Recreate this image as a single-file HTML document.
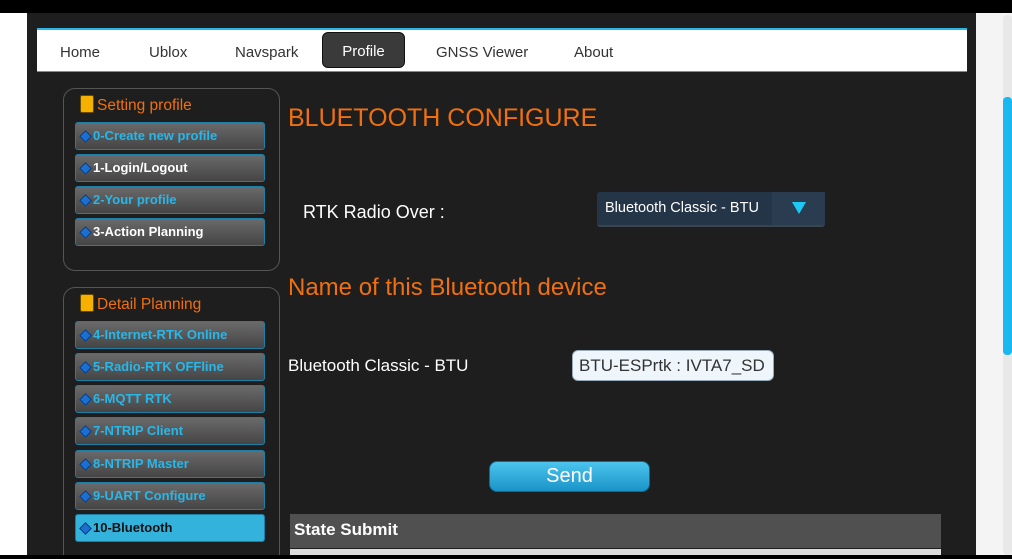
<!DOCTYPE html>
<html style="width:1012px;height:559px;overflow:hidden"><head><style>
*{margin:0;padding:0;box-sizing:border-box}
body{width:1012px;height:559px;overflow:hidden;background:#000;font-family:"Liberation Sans",Arial,sans-serif;position:relative}
.a{position:absolute}
.item{position:absolute;left:75px;width:190px;height:28px;border:1px solid #1c7fa8;border-radius:3px;background:linear-gradient(#6a6a6a,#454545);font-weight:bold;font-size:13px;color:#29b6e8;line-height:26px;padding-left:17px;white-space:nowrap}
.item:before{content:"";position:absolute;left:5px;top:9px;width:7px;height:7px;background:#1a6fd0;border:1px solid #0b3d80;transform:rotate(45deg)}
.box{position:absolute;left:63px;width:217px;border:1px solid #555;border-radius:12px}
.bt{position:absolute;left:16px;top:6px;color:#f07010;font-size:15.5px}
.bt:before{content:"";display:inline-block;width:12px;height:16px;background:#f5b000;border:1px solid #6a4a00;border-radius:2px;margin-right:3px;vertical-align:-3px}
.nav{position:absolute;top:44px;font-size:15px;color:#333}
</style></head><body>
<div class="a" style="left:0;top:13px;width:27px;height:542px;background:#fff"></div>
<div class="a" style="left:27px;top:13px;width:949px;height:542px;background:#1e1e1e"></div>
<div class="a" style="left:976px;top:13px;width:36px;height:542px;background:#f4f4f4"></div>
<div class="a" style="left:1003px;top:15px;width:9px;height:540px;background:#e8e8e8;border-radius:4px"></div>
<div class="a" style="left:1003px;top:97px;width:9px;height:258px;background:#1ab8f0;border-radius:4px"></div>
<div class="a" style="left:37px;top:28px;width:930px;height:44px;background:#fff;border-top:2px solid #29b6e8;border-bottom:1px solid #888"></div>
<div class="nav" style="left:60px">Home</div>
<div class="nav" style="left:149px">Ublox</div>
<div class="nav" style="left:235px">Navspark</div>
<div class="a" style="left:322px;top:32px;width:83px;height:36px;background:#3a3a3a;border:1px solid #111;border-radius:6px;color:#fff;font-size:15px;text-align:center;line-height:38px">Profile</div>
<div class="nav" style="left:436px">GNSS Viewer</div>
<div class="nav" style="left:574px">About</div>

<div class="box" style="top:88px;height:183px"><div class="bt">Setting profile</div></div>
<div class="item" style="top:122px">0-Create new profile</div>
<div class="item" style="top:154px;color:#fff">1-Login/Logout</div>
<div class="item" style="top:186px">2-Your profile</div>
<div class="item" style="top:218px;color:#fff">3-Action Planning</div>

<div class="box" style="top:287px;height:290px"><div class="bt">Detail Planning</div></div>
<div class="item" style="top:321px">4-Internet-RTK Online</div>
<div class="item" style="top:353px">5-Radio-RTK OFFline</div>
<div class="item" style="top:385px">6-MQTT RTK</div>
<div class="item" style="top:417px">7-NTRIP Client</div>
<div class="item" style="top:450px">8-NTRIP Master</div>
<div class="item" style="top:482px">9-UART Configure</div>
<div class="item" style="top:514px;background:#33b3dc;color:#111">10-Bluetooth</div>
<div class="a" style="left:0;top:555px;width:1012px;height:4px;background:#000"></div>

<div class="a" style="left:288px;top:104px;color:#f07010;font-size:25px">BLUETOOTH CONFIGURE</div>
<div class="a" style="left:303px;top:202px;color:#fff;font-size:18px">RTK Radio Over :</div>
<div class="a" style="left:597px;top:192px;width:228px;height:35px;background:#253548;border-radius:3px;border-bottom:2px solid #3a4550"><span class="a" style="left:8px;top:8px;color:#fff;font-size:14.5px">Bluetooth Classic - BTU</span><div class="a" style="left:175px;top:0;width:53px;height:33px;background:#2a3c50"></div><div class="a" style="left:195px;top:10px;width:0;height:0;border-left:7px solid transparent;border-right:7px solid transparent;border-top:12px solid #1ec8f5"></div></div>
<div class="a" style="left:288px;top:274px;color:#f07010;font-size:24px">Name of this Bluetooth device</div>
<div class="a" style="left:288px;top:356px;color:#fff;font-size:17px">Bluetooth Classic - BTU</div>
<div class="a" style="left:572px;top:350px;width:202px;height:31px;background:#eef5fb;border:1px solid #9ab;border-radius:6px;color:#333;font-size:17px;line-height:29px;padding-left:6px;white-space:nowrap;overflow:hidden">BTU-ESPrtk : IVTA7_SD</div>
<div class="a" style="left:489px;top:461px;width:161px;height:31px;background:linear-gradient(#4cc4ee,#1a94c8);border:1px solid #116a95;border-radius:8px;color:#fff;font-size:20px;text-align:center;line-height:28px">Send</div>
<div class="a" style="left:290px;top:514px;width:651px;height:34px;background:#505050;color:#fff;font-weight:bold;font-size:17px;line-height:32px;padding-left:4px">State Submit</div>
<div class="a" style="left:290px;top:549px;width:651px;height:6px;background:#ddd"></div>
</body></html>
